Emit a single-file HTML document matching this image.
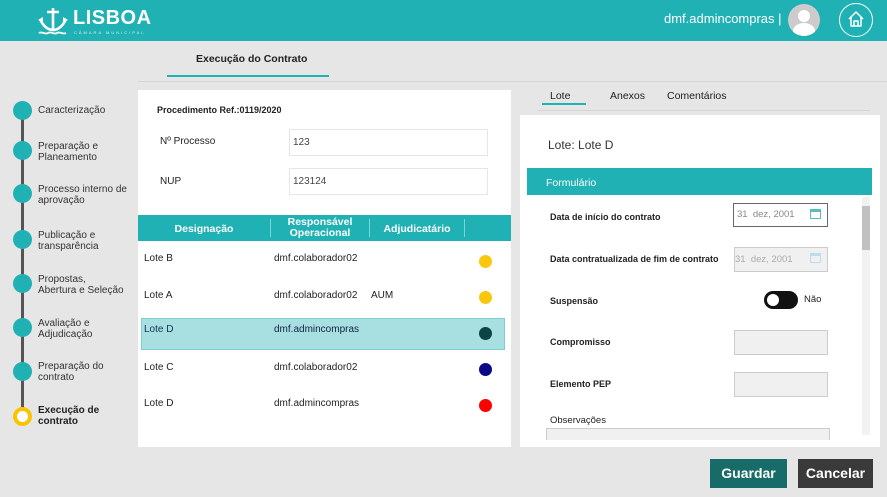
<!DOCTYPE html>
<html><head><meta charset="utf-8"><style>
*{box-sizing:border-box;margin:0;padding:0}
body{width:887px;height:497px;overflow:hidden;background:#e6e6e6;font-family:"Liberation Sans",sans-serif;color:#222;position:relative;font-size:10px}
.a{position:absolute}
.hdr{left:0;top:0;width:887px;height:41px;background:#20b1b4}
.circ{width:19px;height:19px;border-radius:50%;background:#20b1b4;left:13px}
.st{left:38px;font-size:10px;color:#333;line-height:11px}
.dot{width:13px;height:13px;border-radius:50%;left:479px}
.inp{border:1px solid #e6e6e6;background:#fff;font-size:10px;color:#444;padding:11px 4px}
.gin{background:#f0f0f0;border:1px solid #ccc}
.lbl{font-size:9px;font-weight:bold;color:#222}
</style></head><body>
<div class="a hdr"></div>
<svg class="a" style="left:35px;top:6px" width="36" height="30" viewBox="0 0 36 30"><g fill="none" stroke="#fff" stroke-width="2.6"><path d="M18 2v22M12 6h12M5 13c3 7 8 11 13 11s10-4 13-11"/><path d="M4 27c3-2 6 2 9 0s6 2 9 0 6 2 9 0" stroke-width="1.8"/></g><path d="M3 14l5-3 0 5z M33 14l-5-3 0 5z" fill="#fff"/></svg>
<div class="a" style="left:73px;top:7px;color:#fff;font-size:20px;font-weight:bold;letter-spacing:0.5px">LISBOA</div>
<div class="a" style="left:74px;top:30px;color:#d8f0f0;font-size:4px;letter-spacing:2px">CÂMARA MUNICIPAL</div>
<div class="a" style="left:664px;top:11px;color:#fff;font-size:13px">dmf.admincompras |</div>
<div class="a" style="left:788px;top:4px;width:32px;height:32px;border-radius:50%;background:#ccc;overflow:hidden"><div class="a" style="left:10px;top:6px;width:12px;height:12px;border-radius:50%;background:#fff"></div><div class="a" style="left:5px;top:19px;width:22px;height:16px;border-radius:50%;background:#fff"></div></div>
<div class="a" style="left:839px;top:3px;width:34px;height:34px;border-radius:50%;border:1.5px solid #fff"></div>
<svg class="a" style="left:847px;top:10px" width="18" height="18" viewBox="0 0 18 18"><path d="M2 9L9 2l7 7M4 7v9h10V7M7 16v-5h4v5" fill="none" stroke="#fff" stroke-width="1.5" stroke-linejoin="round"/></svg>

<div class="a" style="left:196px;top:53px;font-size:10.5px;font-weight:bold">Execução do Contrato</div>
<div class="a" style="left:167px;top:75px;width:162px;height:2px;background:#20b1b4"></div>
<div class="a" style="left:138px;top:81px;width:749px;height:1px;background:#d4d4d4"></div>

<div class="a" style="left:21px;top:110px;width:3px;height:306px;background:#555"></div>
<div class="a circ" style="top:101px"></div><div class="a st" style="top:105px">Caracterização</div>
<div class="a circ" style="top:141px"></div><div class="a st" style="top:141px">Preparação e<br>Planeamento</div>
<div class="a circ" style="top:184px"></div><div class="a st" style="top:184px">Processo interno de<br>aprovação</div>
<div class="a circ" style="top:230px"></div><div class="a st" style="top:230px">Publicação e<br>transparência</div>
<div class="a circ" style="top:274px"></div><div class="a st" style="top:274px">Propostas,<br>Abertura e Seleção</div>
<div class="a circ" style="top:318px"></div><div class="a st" style="top:318px">Avaliação e<br>Adjudicação</div>
<div class="a circ" style="top:362px"></div><div class="a st" style="top:361px">Preparação do<br>contrato</div>
<div class="a" style="left:13px;top:407px;width:19px;height:19px;border-radius:50%;border:4px solid #f7c600;background:#fff"></div>
<div class="a st" style="top:405px;font-weight:bold;color:#222">Execução de<br>contrato</div>

<div class="a" style="left:138px;top:90px;width:373px;height:357px;background:#fff"></div>
<div class="a lbl" style="left:157px;top:105px">Procedimento Ref.:0119/2020</div>
<div class="a" style="left:160px;top:136px;font-size:10px">Nº Processo</div>
<div class="a inp" style="left:289px;top:129px;width:199px;height:27px;padding:7px 3px">123</div>
<div class="a" style="left:160px;top:176px;font-size:10px">NUP</div>
<div class="a inp" style="left:289px;top:168px;width:199px;height:27px;padding:7px 3px">123124</div>
<div class="a" style="left:138px;top:215px;width:373px;height:26px;background:#20b1b4;color:#fff;font-weight:bold;font-size:10.5px">
<div class="a" style="left:0;width:132px;top:8px;text-align:center">Designação</div>
<div class="a" style="left:132px;top:4px;width:1px;height:18px;background:#7fd3d4"></div>
<div class="a" style="left:133px;width:98px;top:2px;text-align:center;line-height:11px">Responsável<br>Operacional</div>
<div class="a" style="left:231px;top:4px;width:1px;height:18px;background:#7fd3d4"></div>
<div class="a" style="left:232px;width:94px;top:8px;text-align:center">Adjudicatário</div>
<div class="a" style="left:326px;top:4px;width:1px;height:18px;background:#7fd3d4"></div>
</div>
<div class="a" style="left:144px;top:253px">Lote B</div><div class="a" style="left:274px;top:253px">dmf.colaborador02</div><div class="a dot" style="top:255px;background:#f9c80e"></div>
<div class="a" style="left:144px;top:290px">Lote A</div><div class="a" style="left:274px;top:290px">dmf.colaborador02</div><div class="a" style="left:371px;top:290px">AUM</div><div class="a dot" style="top:291px;background:#f9c80e"></div>
<div class="a" style="left:141px;top:318px;width:364px;height:32px;background:#a8e0e1;border:1px solid #7fcfd0"></div>
<div class="a" style="left:144px;top:324px;color:#135">Lote D</div><div class="a" style="left:274px;top:324px;color:#124">dmf.admincompras</div><div class="a dot" style="top:327px;background:#0c4444"></div>
<div class="a" style="left:144px;top:362px">Lote C</div><div class="a" style="left:274px;top:362px">dmf.colaborador02</div><div class="a dot" style="top:363px;background:#0a0a88"></div>
<div class="a" style="left:144px;top:398px">Lote D</div><div class="a" style="left:274px;top:398px">dmf.admincompras</div><div class="a dot" style="top:399px;background:#f00"></div>

<div class="a" style="left:550px;top:90px;font-size:10.5px">Lote</div>
<div class="a" style="left:542px;top:103px;width:44px;height:2px;background:#20b1b4"></div>
<div class="a" style="left:610px;top:90px;font-size:10.5px">Anexos</div>
<div class="a" style="left:667px;top:90px;font-size:10.5px">Comentários</div>
<div class="a" style="left:538px;top:110px;width:332px;height:1px;background:#d4d4d4"></div>
<div class="a" style="left:520px;top:115px;width:360px;height:332px;background:#fff"></div>
<div class="a" style="left:548px;top:138px;font-size:12px;color:#333">Lote: Lote D</div>
<div class="a" style="left:527px;top:168px;width:345px;height:27px;background:#20b1b4;color:#fff;font-size:10.5px;padding:9px 0 0 19px">Formulário</div>
<div class="a" style="left:862px;top:197px;width:8px;height:238px;background:#f2f2f2"></div>
<div class="a" style="left:862px;top:206px;width:8px;height:44px;background:#c1c1c1"></div>
<div class="a lbl" style="left:550px;top:212px">Data de início do contrato</div>
<div class="a" style="left:733px;top:203px;width:95px;height:24px;border:1.5px solid #667;font-size:9.5px;color:#888;padding:5px 3px">31 &nbsp;dez, 2001</div>
<div class="a" style="left:810px;top:209px;width:11px;height:10px;border:1.5px solid #55bfc0;border-top-width:3px"></div>
<div class="a lbl" style="left:550px;top:254px">Data contratualizada de fim de contrato</div>
<div class="a gin" style="left:734px;top:247px;width:94px;height:25px;font-size:9.5px;color:#aaa;padding:6px 0">31 &nbsp;dez, 2001</div>
<div class="a" style="left:810px;top:253px;width:11px;height:10px;border:1px solid #bde;border-top-width:3px"></div>
<div class="a lbl" style="left:550px;top:296px">Suspensão</div>
<div class="a" style="left:764px;top:291px;width:34px;height:18px;border-radius:9px;background:#111"></div>
<div class="a" style="left:767px;top:294px;width:12px;height:12px;border-radius:50%;background:#fff"></div>
<div class="a" style="left:804px;top:294px;font-size:9.5px">Não</div>
<div class="a lbl" style="left:550px;top:337px">Compromisso</div>
<div class="a gin" style="left:734px;top:330px;width:94px;height:25px"></div>
<div class="a lbl" style="left:550px;top:379px">Elemento PEP</div>
<div class="a gin" style="left:734px;top:372px;width:94px;height:25px"></div>
<div class="a" style="left:550px;top:415px;font-size:9.5px">Observações</div>
<div class="a gin" style="left:546px;top:428px;width:284px;height:12px;border-bottom:none"></div>

<div class="a" style="left:710px;top:459px;width:77px;height:29px;background:#176b68;color:#fff;font-size:14px;font-weight:bold;text-align:center;padding-top:6px">Guardar</div>
<div class="a" style="left:798px;top:459px;width:75px;height:29px;background:#3a3a3a;color:#fff;font-size:14px;font-weight:bold;text-align:center;padding-top:6px">Cancelar</div>
</body></html>
